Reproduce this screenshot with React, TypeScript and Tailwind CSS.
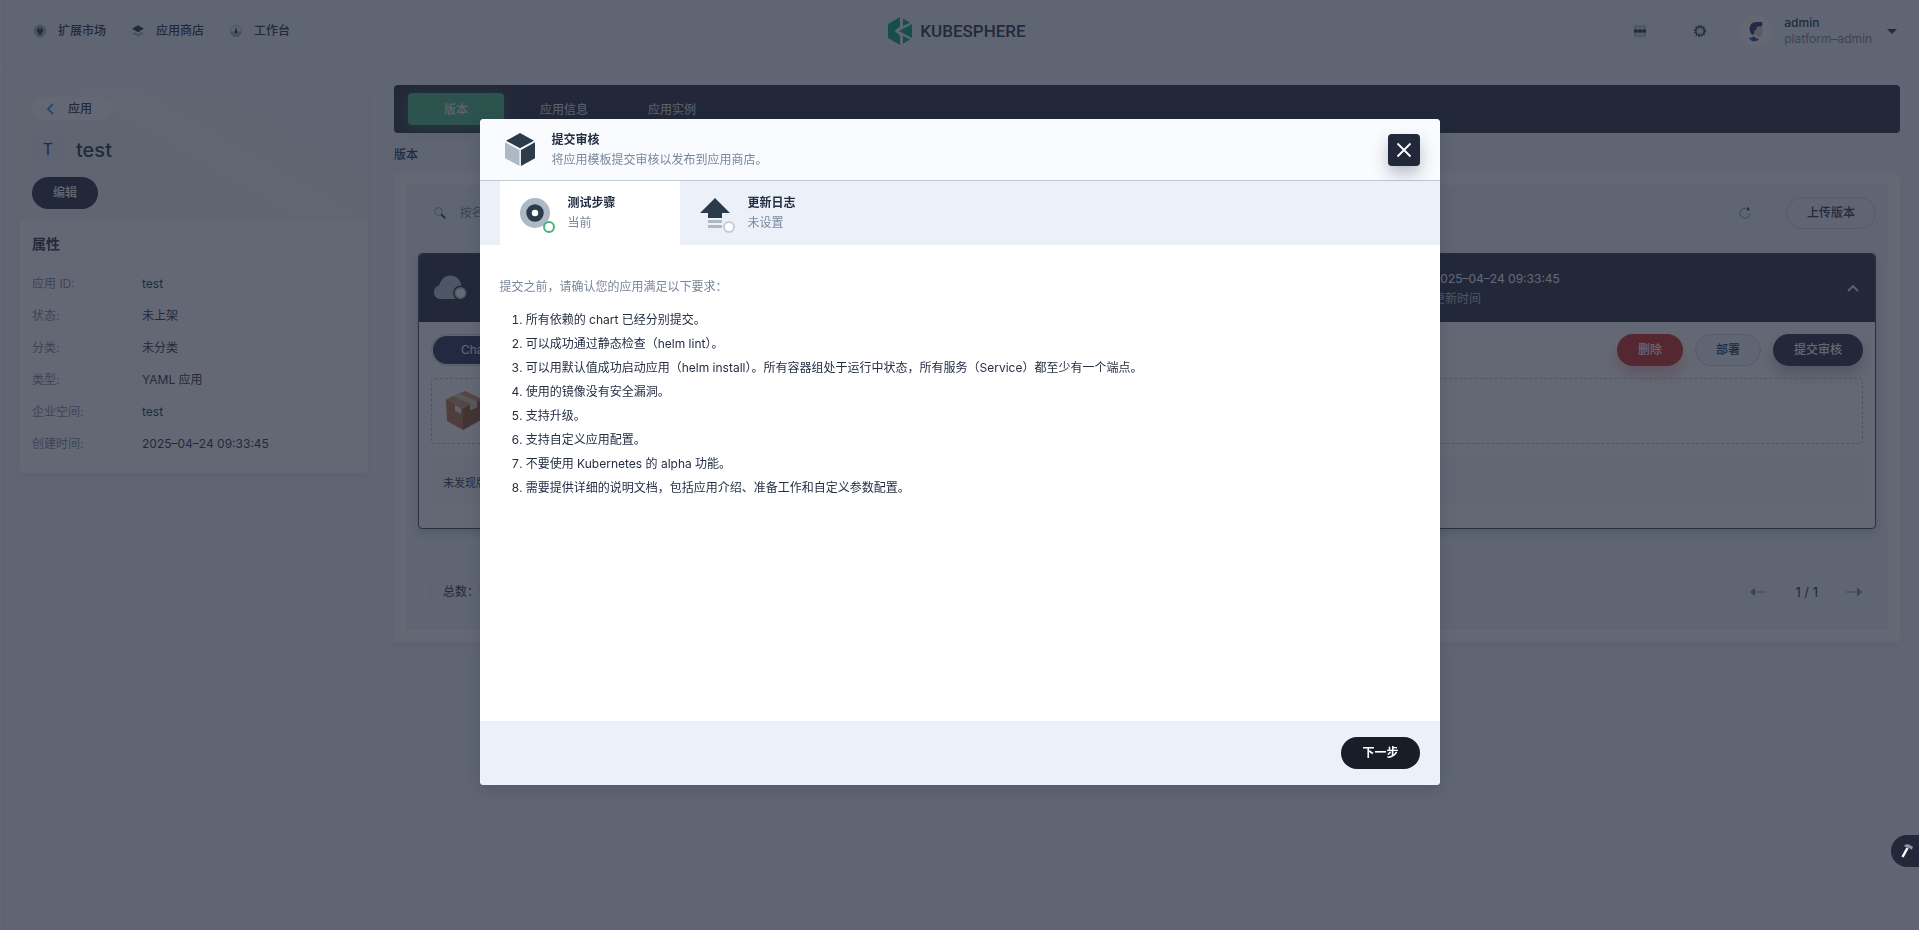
import React from 'react';

const attributes = [
  { label: '应用 ID:', value: 'test' },
  { label: '状态:', value: '未上架' },
  { label: '分类:', value: '未分类' },
  { label: '类型:', value: 'YAML 应用' },
  { label: '企业空间:', value: 'test' },
  { label: '创建时间:', value: '2025–04–24 09:33:45' },
];

const requirements = [
  '所有依赖的 chart 已经分别提交。',
  '可以成功通过静态检查（helm lint）。',
  '可以用默认值成功启动应用（helm install）。所有容器组处于运行中状态，所有服务（Service）都至少有一个端点。',
  '使用的镜像没有安全漏洞。',
  '支持升级。',
  '支持自定义应用配置。',
  '不要使用 Kubernetes 的 alpha 功能。',
  '需要提供详细的说明文档，包括应用介绍、准备工作和自定义参数配置。',
];

function PlugIcon() {
  return (
    <svg className="size-4" viewBox="0 0 16 16" aria-hidden="true">
      <circle cx="8" cy="8" r="6.5" fill="#a9b5c1" />
      <path d="M6 4.400h1.200v2h1.600v-2H10v2h1v2.100L9.400 10.200v1.600H6.600v-1.600L5 8.500V6.400h1z" fill="#242e42" />
    </svg>
  );
}

function LayersIcon() {
  return (
    <svg className="size-4" viewBox="0 0 16 16" aria-hidden="true">
      <path d="M8 13.800 2 10.500l2.500-1.400L8 11l3.500-1.900L14 10.500z" fill="#a9b5c1" />
      <path d="M8 2.200 14 5.700 8 9.200 2 5.700z" fill="#242e42" />
    </svg>
  );
}

function DashboardIcon() {
  return (
    <svg className="size-4" viewBox="0 0 16 16" aria-hidden="true">
      <circle cx="8" cy="8" r="5.500" fill="none" stroke="#a9b5c1" />
      <path d="M2.500 8.500h11a5.500 5.500 0 0 1-11 0z" fill="#a9b5c1" />
      <path d="M8 3.800 9.300 9a1.300 1.300 0 1 1-2.600 0z" fill="#242e42" />
    </svg>
  );
}

function LogoMark() {
  return (
    <svg className="h-7 w-6" viewBox="0 0 24 28" aria-hidden="true">
      <g fill="#00a971">
        <path d="M12 0v9.500L6.500 14l5.500 4.500V28L0 21V7z" />
        <path d="M24 7v14L11 14z" />
        <path d="M15 1.500 22 5.700 15 9z" />
        <path d="M15 19l7 3.500-7 4.200z" />
      </g>
    </svg>
  );
}

function GridIcon() {
  return (
    <svg className="size-4" viewBox="0 0 16 16" aria-hidden="true">
      <path d="M2 2h3.500v3.500H2zM6.250 2h3.500v3.500h-3.500zM10.500 2H14v3.500h-3.500zM2 10.500h3.500V14H2zM6.250 10.500h3.500V14h-3.500zM10.500 10.500H14V14h-3.500z" fill="#b6c2cd" />
      <path d="M2 6.250h3.500v3.500H2zM6.250 6.250h3.500v3.500h-3.500zM10.500 6.250H14v3.500h-3.500z" fill="#242e42" />
      <path d="M5 7.500h6v1H5z" fill="#242e42" />
    </svg>
  );
}

function GearIcon() {
  return (
    <svg className="size-4" viewBox="0 0 16 16" aria-hidden="true">
      <circle cx="8" cy="8" r="5.300" fill="none" stroke="#242e42" strokeWidth="1.500" strokeDasharray="1.500 1.275" />
      <circle cx="8" cy="8" r="4.200" fill="none" stroke="#242e42" strokeWidth="1.400" />
      <circle cx="8" cy="8" r="2.300" fill="#eff4f9" stroke="#b6c2cd" strokeWidth="1.400" />
    </svg>
  );
}

function Avatar() {
  return (
    <svg className="size-8" viewBox="0 0 32 32" aria-hidden="true">
      <circle cx="16" cy="16" r="16" fill="#fff" />
      <path d="M14 12h8.400v5.500c0 3-1.400 4.500-3.900 4.500L15 20z" fill="#f0cdb0" />
      <path d="M11 18.500C9 15.500 9.500 12 10.500 10.500 11 8 14 6.800 17 7h5.300v4.200l-5.300.6-.8 3.200-1.700.3-.3 3.700-2 1z" fill="#1d3566" />
      <path d="M9 22.500c2 .5 4 0 4.500-1.500l3 2.500 2.500.5c-1 2-3.500 2.500-5.500 2.300-2-.1-3.800-1.300-4.500-3.800z" fill="#1c4c7c" />
    </svg>
  );
}

function SearchIcon() {
  return (
    <svg className="size-4" viewBox="0 0 16 16" aria-hidden="true">
      <circle cx="6.500" cy="6.500" r="4" fill="none" stroke="#8d99a8" />
      <path d="m9.500 9.500 4 4" stroke="#242e42" strokeWidth="1.800" />
    </svg>
  );
}

function RefreshIcon() {
  return (
    <svg className="size-4" viewBox="0 0 16 16" aria-hidden="true">
      <path d="M9 3.300a5 5 0 1 0 4 5.200" fill="none" stroke="#79879c" />
      <path d="m10.500 1.500 2.500 3.700H9.500z" fill="#242e42" />
    </svg>
  );
}

function CloudIcon() {
  return (
    <svg className="h-8 w-9" viewBox="0 0 36 32" aria-hidden="true">
      <path d="M8 27A6.800 6.800 0 0 1 6 13.600C8.500 7 12 3.500 17 3.500c6 0 10.500 4 11.500 10 2.500 1.500 3.500 4 3.500 6.500L27 27z" fill="#b6c2cd" />
      <circle cx="27.500" cy="21" r="7.500" fill="#222839" />
      <circle cx="27.500" cy="21" r="5.300" fill="#fff" stroke="#b6c2cd" strokeWidth="1.500" />
    </svg>
  );
}

function PackageIcon() {
  return (
    <svg className="size-10" viewBox="0 0 40 40" aria-hidden="true">
      <path d="M2 8 19 17v22L3 30z" fill="#b5713c" />
      <path d="M19 17 38 8l-1 21-18 10z" fill="#8f5229" />
      <path d="M2 8 21 0l17 8-19 9z" fill="#c98c58" />
      <path d="m9 5 6-2.500 18 8v6l-7 3v-7z" fill="#d9c4ae" />
      <path d="m11 14 6 3v6l-6-3z" fill="#dfe6ee" />
    </svg>
  );
}

function CubeIcon() {
  return (
    <svg className="h-9 w-8" viewBox="0 0 32 36" aria-hidden="true">
      <path d="M16 1 30 8.800 16 16.200 2 8.800z" fill="#2b3b4b" />
      <path d="M1 10.300 15.500 18v16L1 26.200z" fill="#adb9c5" />
      <path d="M31 10.300 17 18v16l14-7.800z" fill="#2b3b4b" />
      <path d="M16 18.500V34" stroke="#d3dbe3" />
    </svg>
  );
}

function TargetIcon({ ring }: { ring: string }) {
  return (
    <svg className="h-[46px] w-10" viewBox="0 -6 40 46" aria-hidden="true">
      <circle cx="17" cy="17" r="15" fill="#adb9c5" />
      <circle cx="17" cy="17" r="6" fill="#fff" stroke="#2b3b4b" strokeWidth="5.500" />
      <circle cx="31" cy="31" r="5" fill="#fff" stroke={ring} strokeWidth="2" />
    </svg>
  );
}

function UploadIcon({ ring }: { ring: string }) {
  return (
    <svg className="h-[46px] w-10" viewBox="0 -6 40 46" aria-hidden="true">
      <path d="M17 2 32 17h-8v5H10v-5H2z" fill="#2b3b4b" />
      <path d="M10 24h14v3H10zM10 29h14v3H10z" fill="#adb9c5" />
      <circle cx="31" cy="31" r="5" fill="#fff" stroke={ring} strokeWidth="2" />
    </svg>
  );
}

function HammerIcon() {
  return (
    <svg className="size-4" viewBox="0 0 16 16" aria-hidden="true">
      <path d="m8.500 5-5 9" stroke="#fff" strokeWidth="2.500" />
      <path d="M5 2.500C7.500.8 10 1.200 11.500 2.500l2.500 1.200-1.200 3L11 5.500 6.500 4z" fill="#8f959e" />
    </svg>
  );
}

function TopBar() {
  const links = [
    { icon: <PlugIcon />, text: '扩展市场' },
    { icon: <LayersIcon />, text: '应用商店' },
    { icon: <DashboardIcon />, text: '工作台' },
  ];
  return (
    <header className="grid h-[65px] grid-cols-[1fr_auto_1fr] items-center border-b border-[#e6ecf2] pb-0.5 pl-[31px] pr-[21px]">
      <nav className="flex gap-6">
        {links.map((l) => (
          <a key={l.text} href="#" className="flex items-center gap-[10px] font-medium">
            {l.icon}
            {l.text}
          </a>
        ))}
      </nav>
      <a href="#" className="mr-4 flex items-center gap-2 text-[#242e42]">
        <LogoMark />
        <span className="font-['Roboto',sans-serif] text-[17px] font-medium leading-7">KUBESPHERE</span>
      </a>
      <div className="flex items-center justify-end">
        <button type="button" aria-label="控制台" className="mr-11"><GridIcon /></button>
        <button type="button" aria-label="设置" className="mr-8"><GearIcon /></button>
        <Avatar />
        <button type="button" className="ml-3 flex items-center gap-[14px] text-left">
          <span className="flex flex-col leading-4">
            <span className="font-medium">admin</span>
            <span className="text-[#79879c]">platform–admin</span>
          </span>
          <svg className="h-2 w-3" viewBox="0 0 12 8" aria-hidden="true"><path d="M1 2h10L6 7z" fill="#242e42" /></svg>
        </button>
      </div>
    </header>
  );
}

function Sidebar() {
  return (
    <aside className="w-[348px] shrink-0 rounded bg-white shadow-[0_4px_8px_rgba(36,46,66,0.06)]">
      <div className="flex h-[136px] flex-col items-start gap-3 rounded-t bg-[linear-gradient(30deg,#f0f4f8_45%,#f6f8fa_50%,#f3f6f9_65%,#eff4f9_75%)] p-3">
        <a href="#" className="flex h-6 w-20 items-center gap-3 rounded-full bg-white pl-3 font-medium">
          <svg className="size-3" viewBox="0 0 12 12" aria-hidden="true"><path d="M9 1 4 6l5 5" fill="none" stroke="#329dce" strokeWidth="2" /></svg>
          应用
        </a>
        <div className="flex items-center gap-3">
          <span className="flex size-8 items-center justify-center rounded bg-[#edf2f7] text-base">T</span>
          <h1 className="pt-0.5 text-xl font-medium leading-[30px]">test</h1>
        </div>
        <button type="button" className="h-8 shrink-0 rounded-full bg-[#222839] px-[21px] font-medium text-white">编辑</button>
      </div>
      <div className="px-3 pb-[13px] pt-3">
        <h2 className="text-sm font-semibold leading-[22px]">属性</h2>
        <dl className="mt-[13px] flex flex-col">
          {attributes.map((a) => (
            <div key={a.label} className="flex h-8 items-center">
              <dt className="w-[110px] text-[#79879c]">{a.label}</dt>
              <dd>{a.value}</dd>
            </div>
          ))}
        </dl>
      </div>
    </aside>
  );
}

function VersionCard() {
  return (
    <article className="rounded border border-[#36435c] bg-white shadow-[0_4px_8px_rgba(36,46,66,0.2)]">
      <div className="flex h-[68px] items-center rounded-t-sm bg-[#222839] px-[14px] text-white">
        <CloudIcon />
        <div className="ml-auto flex w-[428px] items-center justify-between">
          <div className="flex flex-col pt-0.5 leading-5">
            <span>2025–04–24 09:33:45</span>
            <span className="text-[#b6c2cd]">更新时间</span>
          </div>
          <button type="button" aria-label="收起">
            <svg className="size-4" viewBox="0 0 16 16" aria-hidden="true"><path d="m3 11 5-5 5 5" fill="none" stroke="#e3e9ef" strokeWidth="1.800" /></svg>
          </button>
        </div>
      </div>
      <div className="flex flex-col gap-3 px-3 pb-6 pt-3">
        <div className="flex items-center justify-between">
          <div className="rounded-full border border-[#ccd3db] bg-[#eff4f9] p-px">
            <button type="button" className="h-7 rounded-full bg-[#242e50] px-7 text-white">Chart 文件</button>
          </div>
          <div className="flex gap-3 font-medium">
            <button type="button" className="h-8 rounded-full bg-[#ca2621] px-[21px] text-white shadow-[0_8px_16px_rgba(202,38,33,0.3)]">删除</button>
            <button type="button" className="h-8 rounded-full border border-[#ccd3db] bg-[#eff4f9] px-5">部署</button>
            <button type="button" className="h-8 rounded-full bg-[#222839] px-[21px] text-white shadow-[0_8px_16px_rgba(36,46,66,0.3)]">提交审核</button>
          </div>
        </div>
        <div className="flex h-[66px] items-center rounded border border-dashed border-[#b6c2cd] px-3"><PackageIcon /></div>
        <p className="flex h-12 items-center rounded bg-[#f4f7f9] px-3 pt-1.5 text-[11px]">未发现版本</p>
      </div>
    </article>
  );
}

function VersionPanel() {
  return (
    <section className="rounded bg-white p-3 shadow-[0_4px_8px_rgba(36,46,66,0.06)]">
      <div className="bg-[#eff4f9] p-3">
        <div className="flex items-center">
          <label className="flex grow items-center gap-3 pl-[14px]">
            <SearchIcon />
            <input className="w-full bg-transparent outline-none placeholder:text-[#79879c]" placeholder="按名称搜索" />
          </label>
          <button type="button" aria-label="刷新" className="mx-8 px-px"><RefreshIcon /></button>
          <button type="button" className="h-8 shrink-0 rounded-full border border-[#ccd3db] px-5 font-medium">上传版本</button>
        </div>
        <div className="pt-6"><VersionCard /></div>
        <div className="mb-[14px] mt-[51px] flex items-center justify-between px-3">
          <span className="border-l border-[#dde4eb] pl-3 leading-3">总数：1</span>
          <div className="flex items-center gap-[26px] leading-6">
            <button type="button" aria-label="上一页">
              <svg className="h-4 w-5" viewBox="0 0 20 16" aria-hidden="true"><path d="M6 8h11" stroke="#b6c2cd" strokeWidth="1.800" /><path d="M6 3.500v9L1 8z" fill="#79879c" /></svg>
            </button>
            <span className="text-[13px]">1 / 1</span>
            <button type="button" aria-label="下一页">
              <svg className="h-4 w-5" viewBox="0 0 20 16" aria-hidden="true"><path d="M2 8h11" stroke="#b6c2cd" strokeWidth="1.800" /><path d="M13 3.500v9L18 8z" fill="#79879c" /></svg>
            </button>
          </div>
        </div>
      </div>
    </section>
  );
}

function SubmitDialog() {
  return (
    <div className="fixed inset-0 flex items-start justify-center bg-[#222839]/70 pt-[119px]">
      <div role="dialog" aria-modal="true" aria-labelledby="dialog-title" className="flex w-[960px] flex-col overflow-hidden rounded bg-white shadow-[0_4px_16px_rgba(36,46,66,0.2)]">
        <div className="flex h-[62px] items-center border-b border-[#c1cbd5] bg-[#f9fbfe] pl-6 pr-5">
          <CubeIcon />
          <div className="ml-4 grow leading-5">
            <h2 id="dialog-title" className="font-semibold">提交审核</h2>
            <p className="text-[#79879c]">将应用模板提交审核以发布到应用商店。</p>
          </div>
          <button type="button" aria-label="关闭" className="flex size-8 items-center justify-center rounded bg-[#222839] shadow-[0_8px_16px_rgba(36,46,66,0.3)]">
            <svg className="size-4" viewBox="0 0 16 16" aria-hidden="true"><path d="m1.500 1.500 13 13M14.500 1.500l-13 13" stroke="#fff" strokeWidth="1.800" /></svg>
          </button>
        </div>
        <div className="flex h-16 bg-[#ecf1f9] px-5 leading-5">
          <button type="button" className="flex w-[180px] items-center gap-[10px] bg-white pl-[18px] text-left">
            <TargetIcon ring="#45b47d" />
            <span className="flex flex-col">
              <span className="font-semibold">测试步骤</span>
              <span className="text-[#79879c]">当前</span>
            </span>
          </button>
          <button type="button" className="flex w-[180px] items-center gap-[10px] pl-[18px] text-left">
            <UploadIcon ring="#c5ccd6" />
            <span className="flex flex-col">
              <span className="font-semibold">更新日志</span>
              <span className="text-[#79879c]">未设置</span>
            </span>
          </button>
        </div>
        <div className="min-h-[476px] px-5 py-8">
          <p className="leading-5 text-[#79879c]">提交之前，请确认您的应用满足以下要求：</p>
          <ol className="mt-[11px] list-inside list-decimal pl-3 leading-6">
            {requirements.map((r) => <li key={r}>{r}</li>)}
          </ol>
        </div>
        <div className="flex h-16 items-center justify-end bg-[#ecf1f9] px-5">
          <button type="button" className="h-8 rounded-full bg-[#181d28] px-[21px] font-semibold text-white">下一步</button>
        </div>
      </div>
    </div>
  );
}

export default function App() {
  const tabs = ['版本', '应用信息', '应用实例'];
  return (
    <div className="min-h-screen border-l border-white bg-[#eff4f9] font-['Inter','Noto_Sans_CJK_SC',sans-serif] text-xs text-[#242e42]">
      <TopBar />
      <div className="flex items-start gap-[26px] px-[19px] py-5">
        <Sidebar />
        <main className="min-w-0 grow">
          <nav className="flex h-12 items-center gap-3 rounded bg-[#222839] px-[14px] text-[#e3e9ef]">
            {tabs.map((t, i) => (
              <a
                key={t}
                href="#"
                className={i === 0
                  ? 'flex h-8 w-24 items-center justify-center rounded bg-[#45b97f] pt-0.5 font-medium shadow-[0_4px_16px_rgba(85,188,138,0.4)]'
                  : 'flex h-8 items-center justify-center px-6 pt-0.5'}
              >
                {t}
              </a>
            ))}
          </nav>
          <h2 className="pb-[10px] pt-[14px] font-medium leading-4">版本</h2>
          <VersionPanel />
        </main>
      </div>
      <SubmitDialog />
      <button type="button" aria-label="工具箱" className="fixed bottom-[63px] right-0 flex h-8 w-7 items-center rounded-l-full bg-[#222839] pl-2"><HammerIcon /></button>
    </div>
  );
}
